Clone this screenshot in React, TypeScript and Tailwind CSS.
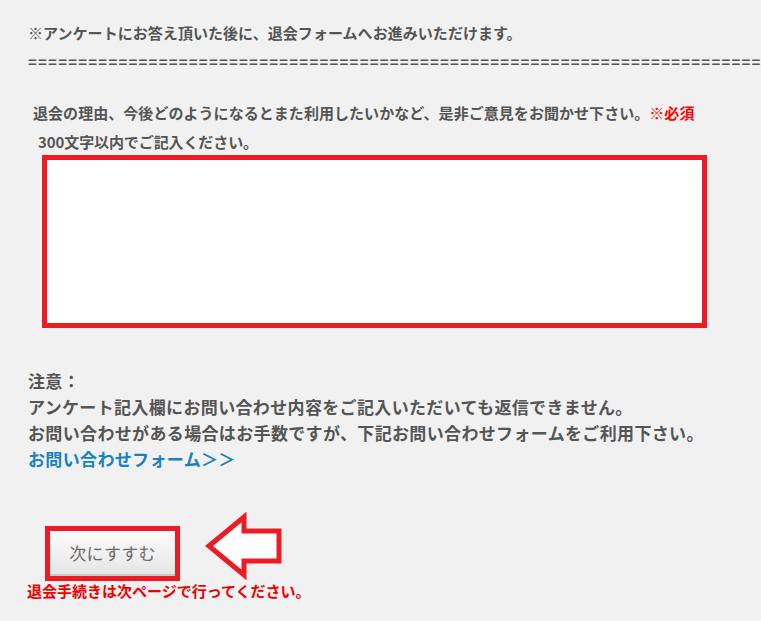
import React from "react";

const FONT = { fontFamily: '"Noto Sans CJK JP", "Noto Sans", sans-serif' };

export default function App() {
  const eq = "=".repeat(120);
  return (
    <div
      className="w-[761px] h-[621px] overflow-hidden bg-[#f1f1f1] text-[#555555] pl-[28px] pt-[23px]"
      style={FONT}
    >
      <p className="text-[15px] leading-[20px] font-bold whitespace-nowrap tracking-[0.05px]">
        ※アンケートにお答え頂いた後に、退会フォームへお進みいただけます。
      </p>
      <div className="mt-[9px] w-[733px] overflow-hidden">
        <p className="text-[15px] leading-[20px] font-bold whitespace-nowrap tracking-[1.2px]">
          {eq}
        </p>
      </div>

      <p className="mt-[31px] ml-[5px] text-[15px] leading-[20px] font-bold whitespace-nowrap tracking-[0.05px]">
        退会の理由、今後どのようになるとまた利用したいかなど、是非ご意見をお聞かせ下さい。
        <span className="text-[#ff0000]">※必須</span>
      </p>
      <p className="mt-[9px] ml-[10px] text-[15px] leading-[20px] font-bold whitespace-nowrap tracking-[-0.1px]">
        300文字以内でご記入ください。
      </p>

      <div className="mt-[3px] ml-[14px] w-[665px] h-[173px] border-[5px] border-[#ed1c24] bg-white" />

      <div className="mt-[40px] text-[17px] leading-[26px] font-bold whitespace-nowrap tracking-[0.35px]">
        <p>注意：</p>
        <p>アンケート記入欄にお問い合わせ内容をご記入いただいても返信できません。</p>
        <p>お問い合わせがある場合はお手数ですが、下記お問い合わせフォームをご利用下さい。</p>
        <p className="text-[#1a80c4]">お問い合わせフォーム＞＞</p>
      </div>

      <div className="mt-[40px] flex items-start">
        <div className="mt-[14px] ml-[17px] border-[5px] border-[#ed1c24]">
          <div className="w-[125px] h-[45px] flex items-center justify-center bg-gradient-to-b from-[#fbfbfb] to-[#e6e6e6] border-b-2 border-[#c8c8c8] text-[17px] text-[#6b6b6b] tracking-[0.3px]">
            次にすすむ
          </div>
        </div>
        <svg
          className="ml-[24px]"
          width="82"
          height="68"
          viewBox="0 0 82 68"
        >
          <polygon
            points="5,34 40,5 40,19 75,19 75,49 40,49 40,63"
            fill="#ffffff"
            stroke="#ed1c24"
            strokeWidth="5"
            strokeLinejoin="miter"
          />
        </svg>
      </div>

      <p className="-ml-[1px] text-[15px] leading-[20px] font-bold text-[#ee0000] whitespace-nowrap tracking-[0px]">
        退会手続きは次ページで行ってください。
      </p>
    </div>
  );
}
